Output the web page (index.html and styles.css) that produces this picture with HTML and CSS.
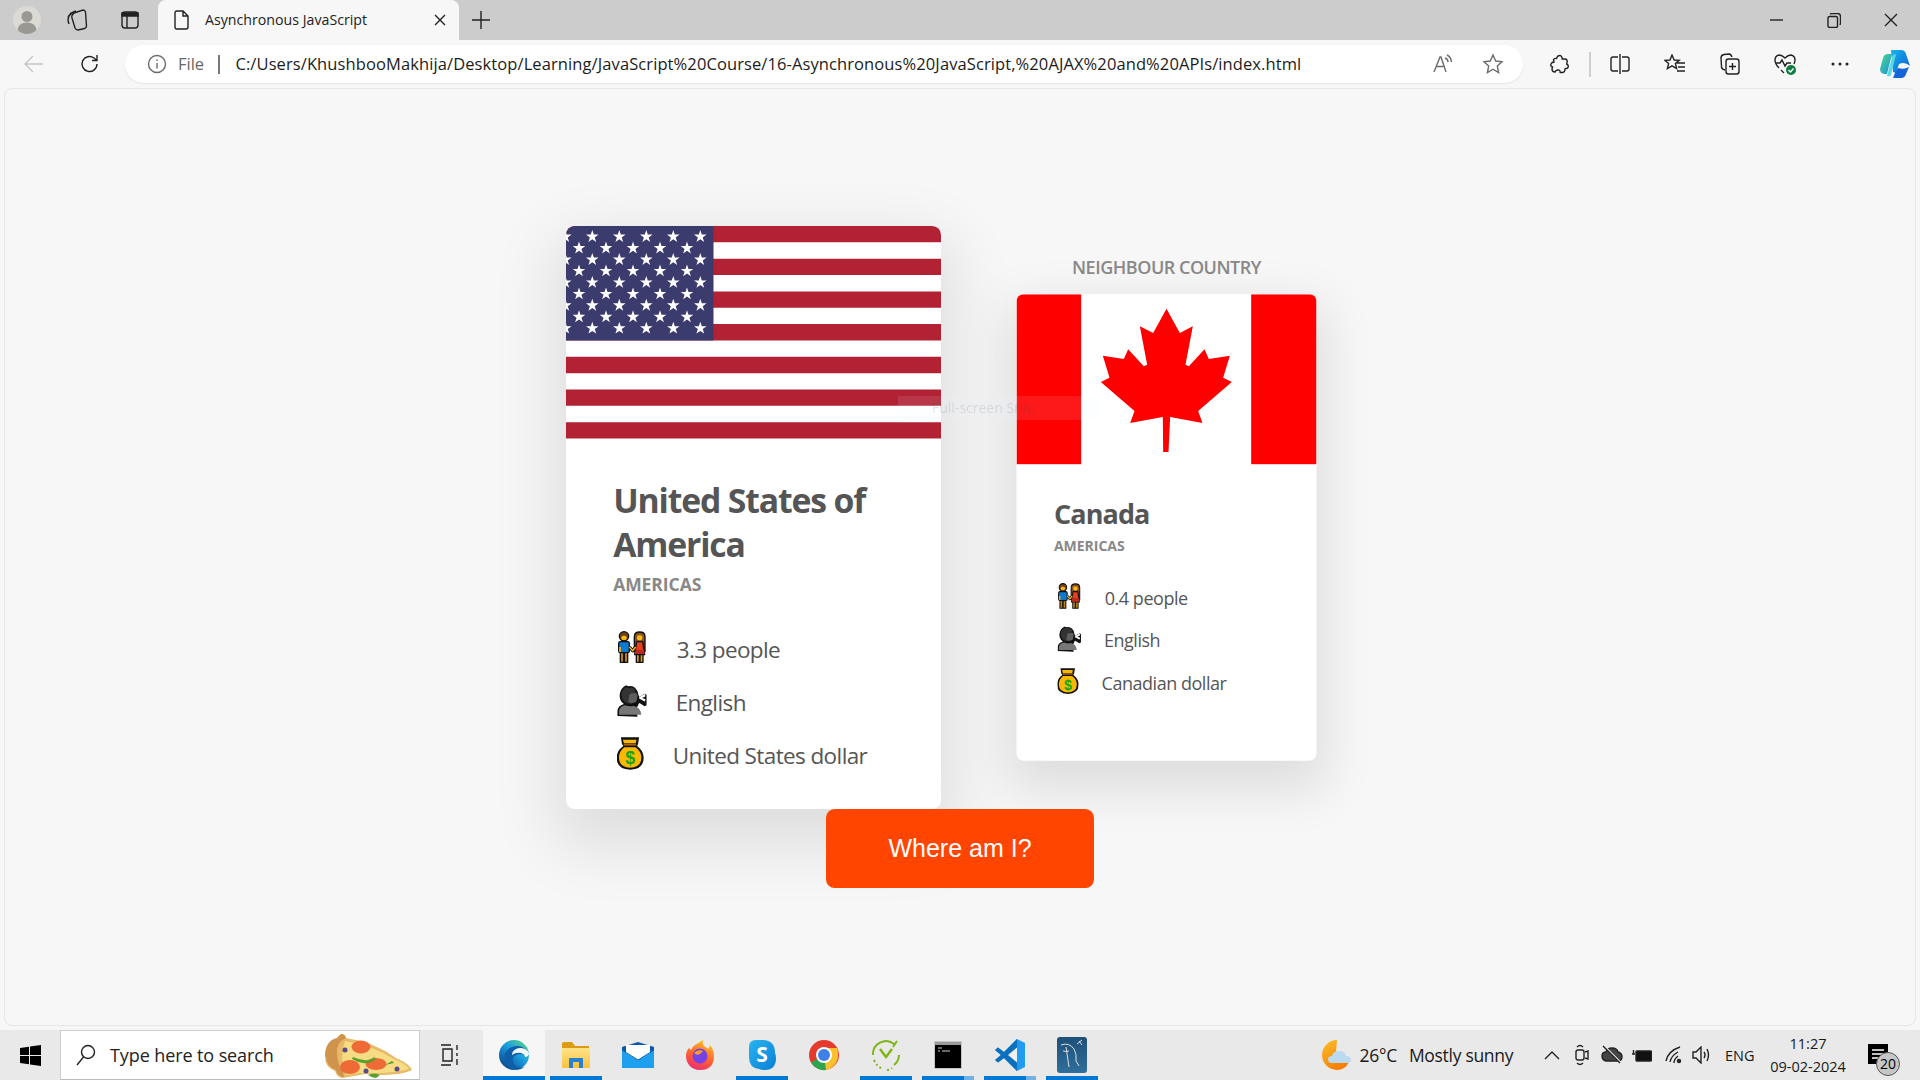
FILE: index.html
```html
<!DOCTYPE html>
<html lang="en">
<head>
<meta charset="utf-8">
<title>Asynchronous JavaScript</title>
<link rel="stylesheet" href="styles.css">
</head>
<body>
<svg class="defs" width="0" height="0" aria-hidden="true">
  <defs>
    <symbol id="e-people" viewBox="53 36 90 99">
      <path d="M90 84l10 11 9-11" fill="none" stroke="#111" stroke-width="10" stroke-linejoin="round"/>
      <g stroke="#111" stroke-width="4" stroke-linejoin="round">
        <path d="M63 100h10v30H63zM75 100h10v30H75z" fill="#bb8108"/>
        <rect x="58" y="68" width="32" height="33" rx="5" fill="#0c7ad2"/>
        <circle cx="74" cy="52" r="14" fill="#6e4218"/>
        <path d="M111 105h9v25h-9zM122 105h9v25h-9z" fill="#e3a00c"/>
        <path d="M105 98V53q0-14 16-14t16 14v45z" fill="#8a5020"/>
        <path d="M112 68h18l6 39h-30z" fill="#e8401a"/>
      </g>
      <rect x="66" y="50" width="16" height="13" rx="5.500" fill="#fbb810"/>
      <rect x="59.500" y="84" width="5" height="15" fill="#fbb810"/>
      <path d="M90 84l10 11 9-11" fill="none" stroke="#fbb810" stroke-width="4.500"/>
      <rect x="113" y="49" width="16" height="15" rx="5.500" fill="#fbb810"/>
      <path d="M109 92h25l2 13h-30z" fill="#b92a22"/>
    </symbol>
    <symbol id="e-speak" viewBox="52 190 92 102">
      <path d="M53 289v-14q0-17 20-23-15-10-13-30 3-20 20-28l6 3q14-3 22 5 8 7 10 22l3 6 16-10 6 3v33l-6 3-16-10-3 3q-1 10-12 12l-12 2q18 1 21 24v1z" fill="#111"/>
      <path d="M58 285v-10q0-15 19-19 12 5 25 2 22 2 25 27z" fill="#777"/>
      <path d="M65 222q2-16 16-23l6 3q13-3 19 4 3 4 4 10-10-1-14 8-2 6-5 7l-2 5q0 7 3 16-27-3-27-30z" fill="#333"/>
      <path d="M89 225q4-8 22-7l5 9-3 4 3 3-3 1v5q-1 7-10 8l-8 2q-6-1-8-6-1-7 2-11z" fill="#5e5e5e"/>
      <path d="M120 231l17-10 2 2v6l-10 4 10 3v6l-2 2-17-9z" fill="#fff"/>
    </symbol>
    <symbol id="e-money" viewBox="52 350 82 100">
      <path d="M64 351h55l-3 20-3 6q20 14 20 36 0 35-41 36-41-1-41-36 0-22 20-36l-4-6z" fill="#111"/>
      <path d="M70 358h41l-2 11H73z" fill="#fbb800"/>
      <rect x="72" y="370" width="38" height="6" fill="#a85f18"/>
      <path d="M74 381h34q18 12 18 32 0 29-34 30-34-1-34-30 0-20 16-32z" fill="#fbb800"/>
      <text x="92" y="433" class="dollar">$</text>
    </symbol>
    <g id="s-row6">
      <use href="#s-star" x="-0.7"/><use href="#s-star" x="26.3"/><use href="#s-star" x="53.3"/><use href="#s-star" x="80.3"/><use href="#s-star" x="107.3"/><use href="#s-star" x="134.3"/>
    </g>
    <g id="s-row5">
      <use href="#s-star" x="13"/><use href="#s-star" x="40"/><use href="#s-star" x="67"/><use href="#s-star" x="94"/><use href="#s-star" x="121"/>
    </g>
    <polygon id="s-star" fill="#fff" points="0,-6.6 1.5,-2.1 6.3,-2.1 2.4,0.8 3.9,5.3 0,2.6 -3.9,5.3 -2.4,0.8 -6.3,-2.1 -1.5,-2.1"/>
    <linearGradient id="g-edge" x1="0.9" y1="0.1" x2="0.2" y2="0.9"><stop offset="0" stop-color="#4fd08a"/><stop offset="0.45" stop-color="#1b9de2"/><stop offset="1" stop-color="#0c4f94"/></linearGradient>
    <linearGradient id="g-folder" x1="0" y1="0" x2="0" y2="1"><stop offset="0" stop-color="#ffe38a"/><stop offset="1" stop-color="#f9c33c"/></linearGradient>
    <linearGradient id="g-fox" x1="0.7" y1="0" x2="0.3" y2="1"><stop offset="0" stop-color="#ffc42a"/><stop offset="0.5" stop-color="#ff6a2a"/><stop offset="1" stop-color="#ee2a72"/></linearGradient>
    <linearGradient id="g-sky" x1="0" y1="0" x2="1" y2="1"><stop offset="0" stop-color="#28b4f0"/><stop offset="1" stop-color="#0a7fd6"/></linearGradient>
    <linearGradient id="g-my" x1="0" y1="0" x2="0" y2="1"><stop offset="0" stop-color="#1f4f78"/><stop offset="1" stop-color="#2f6f9b"/></linearGradient>
    <linearGradient id="g-sun" x1="0" y1="0" x2="0.6" y2="1"><stop offset="0" stop-color="#fbc02d"/><stop offset="1" stop-color="#f57c00"/></linearGradient>
    <linearGradient id="g-cop1" x1="0" y1="0" x2="1" y2="1"><stop offset="0" stop-color="#19b5e8"/><stop offset="1" stop-color="#0a5ad8"/></linearGradient>
    <linearGradient id="g-cop2" x1="0" y1="0" x2="1" y2="1"><stop offset="0" stop-color="#4cd98a"/><stop offset="1" stop-color="#1b8fe0"/></linearGradient>
  </defs>
</svg>

<header class="tabstrip">
  <div class="strip-btn strip-profile">
    <svg width="32" height="32" viewBox="0 0 32 32"><circle cx="16" cy="16" r="14" fill="#dcdad5"/><circle cx="16" cy="12.5" r="5.5" fill="#9a9892"/><path d="M6.5 26q1-7.500 9.500-7.500t9.500 7.500q-4 4-9.500 4t-9.500-4z" fill="#9a9892"/></svg>
  </div>
  <div class="strip-btn">
    <svg class="ico" width="22" height="24" viewBox="0 0 22 24"><path d="M2 9l3-4 3-1M3 16q-2-4 0-8l4-4 3-1M8 5l9-3q2 0 2.500 2l1 14q0 2-2 2.500L12 22q-2 0-3-2L6 10q-1-2 2-5z"/></svg>
  </div>
  <div class="strip-btn">
    <svg class="ico" width="20" height="20" viewBox="0 0 20 20"><rect x="2" y="2" width="16" height="16" rx="3"/><path d="M2 3h16v3H2z" fill="#222"/><path d="M7 6v12"/></svg>
  </div>
  <div class="tab">
    <svg class="ico tab-doc" width="16" height="20" viewBox="0 0 16 20"><path d="M2 3q0-2 2-2h6l5 5v11q0 2-2 2H4q-2 0-2-2zM10 1v5h5"/></svg>
    <span class="tab-title">Asynchronous JavaScript</span>
    <svg class="ico tab-close" width="12" height="12" viewBox="0 0 12 12"><path d="M1 1l10 10M11 1L1 11"/></svg>
  </div>
  <svg class="ico tab-plus" width="18" height="18" viewBox="0 0 18 18"><path d="M9 0v18M0 9h18"/></svg>
  <div class="win-ctrls">
    <div class="win-btn"><svg class="ico" width="13" height="2" viewBox="0 0 13 2"><path d="M0 1h13"/></svg></div>
    <div class="win-btn"><svg class="ico" width="14" height="15" viewBox="0 0 14 15"><rect x="1" y="3.500" width="9.500" height="11" rx="1.500"/><path d="M3.500 1.500q0-1 1-1h6q3 0 3 3v7q0 1-1 1"/></svg></div>
    <div class="win-btn"><svg class="ico" width="14" height="14" viewBox="0 0 14 14"><path d="M1 1l12 12M13 1L1 13"/></svg></div>
  </div>
</header>

<nav class="toolbar">
  <svg class="ico-light tb-back" width="20" height="18" viewBox="0 0 20 18"><path d="M19 9H1M9 1L1 9l8 8"/></svg>
  <svg class="ico tb-reload" width="20" height="20" viewBox="0 0 20 20"><path d="M17 10a7.500 7.500 0 1 1-3-6l2.500 2M17 1v5.500h-5"/></svg>
  <div class="address">
    <svg class="ico-grey addr-info" width="20" height="20" viewBox="0 0 20 20"><circle cx="10" cy="10" r="8.500"/><path d="M10 9v5.500M10 5.500v1.500"/></svg>
    <span class="addr-file">File</span>
    <span class="addr-sep"></span>
    <span class="addr-url">C:/Users/KhushbooMakhija/Desktop/Learning/JavaScript%20Course/16-Asynchronous%20JavaScript,%20AJAX%20and%20APIs/index.html</span>
    <svg class="ico-grey addr-read" width="20" height="20" viewBox="0 0 20 20"><path d="M1 18L7 3h1l5 15M3.500 12.500h7M12 4q3 1 3 4M14 1q4 2 4.500 7"/></svg>
    <svg class="ico-grey addr-star" width="22" height="22" viewBox="0 0 22 22"><path d="M11 2l2.700 6 6.300.7-4.700 4.300 1.300 6.500L11 16.200 5.400 19.500l1.300-6.500L2 8.700 8.300 8z"/></svg>
  </div>
  <div class="tools">
    <div class="tool"><svg class="ico" width="20" height="20" viewBox="0 0 20 20"><path d="M8 2q3-1.500 4 1.500l.2 1.500h3q2 .2 2 2.500l-.5 2.500q2 1 1.500 3-.5 2-3 1.500l-.5 2q-.2 2-2.500 2h-2q0-3-2.500-2.500T5 18q-3 0-3-3l.5-2Q0 12 1 10t3-2L3.500 6Q4 4 6.500 4.500 7 3 8 2z"/></svg></div>
    <span class="tool-sep"></span>
    <div class="tool"><svg class="ico" width="20" height="20" viewBox="0 0 20 20"><path d="M8 3H3q-2 0-2 2v10q0 2 2 2h5M12 3h5q2 0 2 2v10q0 2-2 2h-5M10 0v20"/></svg></div>
    <div class="tool"><svg class="ico" width="22" height="20" viewBox="0 0 22 20"><path d="M8 1l2.200 5 5 .4-3.800 3.200 1.200 5L8 11.800l-4.600 2.800 1.200-5L1 6.400 6 6zM13 9h8M14 13h7M13 17h8"/></svg></div>
    <div class="tool"><svg class="ico" width="20" height="22" viewBox="0 0 20 22"><path d="M5 17q-4-1-3.500-4L1 5q0-3 3-3.500l5-.5q2 0 3 3"/><rect x="6" y="6" width="13" height="15" rx="2.500"/><path d="M12.500 10v7M9 13.500h7"/></svg></div>
    <div class="tool"><svg class="ico" width="22" height="22" viewBox="0 0 22 22"><path d="M5 15Q1 11 1 7q0-4 4-5 3 0 6 3 3-3 6-3 4 1 4 5 0 2-1 4M1 10h5l2-3 3 6 2-3h4M7 17l3 3"/><circle cx="17" cy="17" r="5" fill="#107c41" stroke="none"/><path d="M14.500 17l2 2 3-3.500" stroke="#fff"/></svg></div>
    <div class="tool"><svg width="18" height="4" viewBox="0 0 18 4"><circle cx="2" cy="2" r="1.500" fill="#222"/><circle cx="9" cy="2" r="1.500" fill="#222"/><circle cx="16" cy="2" r="1.500" fill="#222"/></svg></div>
    <div class="tool"><svg width="32" height="32" viewBox="0 0 32 32"><path d="M12 2h10q4 0 5 4l4 12q-5-5-11-2l-3 9-3-1z" fill="url(#g-cop1)"/><path d="M4 10q1-4 5-4h4l-5 20H5q-4-1-4-5z" fill="url(#g-cop2)"/><path d="M14 30h8q4 0 5-4l3-7q-5 3-11 1l-3 5z" fill="#1466d8"/><path d="M8 28l5-19q1-3 4-3l-5 21q-1 2-4 1z" fill="#5ad9e0"/></svg></div>
  </div>
</nav>

<div class="frame-wrap">
  <main class="page">
    <section class="countries">
      <article class="country">
        <svg class="flag" viewBox="0 0 375 212.500" preserveAspectRatio="none">
          <rect width="375" height="212.500" fill="#fff"/>
          <path fill="#b22234" d="M0 0h375v16.350H0zM0 32.700h375v16.350H0zM0 65.400h375v16.350H0zM0 98.100h375v16.350H0zM0 130.800h375v16.350H0zM0 163.500h375v16.350H0zM0 196.200h375v16.300H0z"/>
          <rect width="147.500" height="114.450" fill="#3c3b6e"/>
          <use href="#s-row6" y="10.700"/><use href="#s-row5" y="22.200"/><use href="#s-row6" y="33.600"/><use href="#s-row5" y="45"/><use href="#s-row6" y="56.500"/><use href="#s-row5" y="68"/><use href="#s-row6" y="79.400"/><use href="#s-row5" y="90.900"/><use href="#s-row6" y="102.300"/>
        </svg>
        <div class="data">
          <h3 class="name">United States of America</h3>
          <h4 class="region">Americas</h4>
          <p class="row"><svg class="emoji em-people"><use href="#e-people"/></svg><span>3.3 people</span></p>
          <p class="row"><svg class="emoji em-speak"><use href="#e-speak"/></svg><span>English</span></p>
          <p class="row"><svg class="emoji em-money"><use href="#e-money"/></svg><span>United States dollar</span></p>
        </div>
      </article>
      <article class="country neighbour">
        <div class="neighbour-label">Neighbour country</div>
        <svg class="flag" viewBox="20 132 900 510" preserveAspectRatio="none">
          <rect x="20" y="132" width="900" height="510" fill="#fff"/>
          <path fill="#f00" d="M20 132h194v510H20zM724 132h196v510H724z"/>
          <polygon fill="#f00" points="470,175 510,248 549,228 527,343 537,348 584,297 597,326 660,316 640,382 666,395 565,482 578,518 481,500 476,605 460,605 459,500 361,518 374,482 273,395 299,382 279,316 342,326 355,297 402,348 412,343 390,228 430,248"/>
        </svg>
        <div class="data">
          <h3 class="name">Canada</h3>
          <h4 class="region">Americas</h4>
          <p class="row"><svg class="emoji em-people"><use href="#e-people"/></svg><span>0.4 people</span></p>
          <p class="row"><svg class="emoji em-speak"><use href="#e-speak"/></svg><span>English</span></p>
          <p class="row"><svg class="emoji em-money"><use href="#e-money"/></svg><span>Canadian dollar</span></p>
        </div>
      </article>
    </section>
    <button class="btn-country">Where am I?</button>
    <div class="snip-toast"><span class="snip-text">Full-screen Snip</span></div>
  </main>
</div>

<footer class="taskbar">
  <div class="start"><svg width="21" height="21" viewBox="0 0 21 21"><path d="M0 3l9-1.300V10H0zM10 1.500L21 0v10H10zM0 11h9v8.300L0 18zM10 11h11v10L10 19.500z" fill="#000"/></svg></div>
  <div class="search">
    <svg class="ico search-ico" width="20" height="22" viewBox="0 0 20 22"><circle cx="12" cy="8" r="6.500"/><path d="M7.500 13L1 21"/></svg>
    <span class="search-text">Type here to search</span>
    <svg class="pizza" width="90" height="46" viewBox="0 0 90 46">
      <path d="M2 24Q2 8 14 5l4-4q4 0 5 4 28 4 50 20 14 6 16 12-14 7-47 4l-22 4q-6 0-8-7-10-4-10-14z" fill="#e9b96a"/>
      <path d="M2 24Q2 8 14 5l4-4q4 0 5 4-10 4-9 16 1 12 6 18l1 5q-6 0-8-7-10-4-10-14z" fill="#cf934b"/>
      <path d="M22 8q26 4 49 18 12 5 15 10-16 5-48 4l-15 2Q16 24 22 8z" fill="#f6dc82"/>
      <ellipse cx="38" cy="14" rx="9.500" ry="6.500" fill="#ee6a36"/><ellipse cx="27" cy="34" rx="10" ry="7" fill="#ee6a36"/><ellipse cx="53" cy="31" rx="10.500" ry="6" fill="#ee6a36"/>
      <circle cx="22" cy="17" r="2.500" fill="#5a4a8a"/><circle cx="43" cy="38" r="2.500" fill="#5a4a8a"/><circle cx="74" cy="36" r="2.500" fill="#5a4a8a"/>
      <path d="M30 24q8 4 16 3 4-1 5-3l2 2q-6 5-13 4-6-1-11-4zM45 42q6-3 12 0l-4 3q-4 0-8-3zM62 32l7-4 2 2z" fill="#58a02c"/>
    </svg>
  </div>
  <div class="task-view"><svg class="ico" width="22" height="22" viewBox="0 0 22 22"><path d="M1 1h10M1 21h10M3 5h9v12H3zM17 1v5M17 9v3M17 15v6"/></svg></div>
  <div class="apps">
    <div class="app app-active on"><svg width="32" height="32" viewBox="0 0 32 32"><circle cx="16" cy="16" r="15" fill="url(#g-edge)"/><path d="M31 17q-2-9-11-10-9 0-13 7-2 8 4 14 6 4 12 2l4-2q-5 2-9-1-4-3-3-8 2-4 8-4 5 1 8 2z" fill="#0e5fa8"/><path d="M31 16q0-4-4-6-5-2-9 0-4 2-4 6 4-3 9-2 4 1 4 4 2 0 4-2z" fill="#fff" opacity="0.95"/></svg></div>
    <div class="app on"><svg width="30" height="28" viewBox="0 0 30 28"><path d="M1 3q0-2 2-2h8l3 4h14v5H1z" fill="#dd9a12"/><path d="M1 7h28v19q0 1-1 1H2q-1 0-1-1z" fill="url(#g-folder)"/><path d="M8 27V17h14v10h-4v-6h-6v6z" fill="#2a7fd0"/></svg></div>
    <div class="app"><svg width="32" height="26" viewBox="0 0 32 26"><path d="M0 5L16 0l16 5v21H0z" fill="#0a5aa8"/><path d="M0 8l16 10L32 8v18H0z" fill="#1ea0ee"/><path d="M4 3h24v8L16 18 4 11z" fill="#fff"/><path d="M0 8l16 10L32 8" fill="none" stroke="#0a68b8"/></svg></div>
    <div class="app"><svg width="30" height="32" viewBox="0 0 30 32"><path d="M15 31C6 31 1 24 1 17q0-5 3-8l2 2q1-3 4-5 5-3 8-5-1 3 1 6 2 1 4 3 2-2 2-4 4 5 4 11 0 14-14 14z" fill="url(#g-fox)"/><circle cx="15" cy="17" r="7.500" fill="#7542e5"/><path d="M9 14q4-4 9-2l-3 3q-3 2-6-1z" fill="#ff9a2e"/></svg></div>
    <div class="app on"><svg width="28" height="32" viewBox="0 0 28 32"><path d="M8 1h8q11 1 11 13 1 2 1 5 0 12-11 12-4 0-6-1-10-1-10-12V8q0-7 7-7z" fill="url(#g-sky)"/><text x="14" y="23" class="skype">S</text></svg></div>
    <div class="app"><svg width="32" height="32" viewBox="0 0 32 32"><circle cx="16" cy="16" r="15" fill="#e33b2e"/><path d="M16 16L3 23.500A15 15 0 0 0 18 31z" fill="#2fa44f"/><path d="M16 16l14-1A15 15 0 0 1 18 31z" fill="#fbc02d"/><path d="M16 9h13a15 15 0 0 1 1 7H21z" fill="#fbc02d"/><circle cx="16" cy="16" r="8" fill="#fff"/><circle cx="16" cy="16" r="6" fill="#3f7fe8"/></svg></div>
    <div class="app on"><svg width="32" height="34" viewBox="0 0 32 34" fill="none" stroke="#7fb519" stroke-width="2"><path d="M3 17A13 13 0 0 1 24 6M27 3l-4 6"/><path d="M10 11l6 8 6-8" stroke-width="2.500"/><path d="M29 17A13 13 0 0 1 24 27" /><path d="M4 22q3 7 9 9M17 32q3 0 5-2" stroke-dasharray="2 2.500"/></svg></div>
    <div class="app on split"><svg width="28" height="28" viewBox="0 0 28 28"><rect width="28" height="28" rx="1" fill="#c6c6c6"/><rect x="1" y="3" width="26" height="24" fill="#000"/><rect x="1" y="1" width="26" height="3" fill="#9a9a9a"/><path d="M4 7h4M4 10h2M8 10h8" stroke="#ccc"/></svg></div>
    <div class="app on split"><svg width="30" height="32" viewBox="0 0 30 32"><path d="M22 0l8 4v24l-8 4-13-13-6 4.500L0 21l6-5-6-5 3-2.500L9 13z" fill="#1f9cf0"/><path d="M22 0v32L9 19l-6 4.500L0 21l6-5-6-5 3-2.500L9 13z" fill="#0a6fbd"/><path d="M22 8.500L13 16l9 7.500z" fill="#f0f0f0"/></svg></div>
    <div class="app on"><svg width="30" height="36" viewBox="0 0 30 36"><rect width="30" height="36" rx="3" fill="url(#g-my)"/><path d="M4 8q8-3 13 4 3 5 2 12l3 5M9 10l3 20M6 14q3 1 6 0M22 4l3 4M20 7l5-4" fill="none" stroke="#d5e1ea"/></svg></div>
  </div>
  <div class="tray">
    <svg class="tray-sun" width="30" height="32" viewBox="0 0 30 32"><path d="M15 1a15 15 0 1 0 0 30q8 0 12-8L14 13z" fill="url(#g-sun)"/><path d="M10 24q-4 0-4-3.500 0-3.500 4-3.500 1-5 7-5t7 5q5 0 5 3.500t-4 3.500z" fill="#bcd9f2"/></svg>
    <span class="tray-temp">26°C</span>
    <span class="tray-cond">Mostly sunny</span>
    <svg class="ico tray-chev" width="16" height="9" viewBox="0 0 16 9"><path d="M1 8l7-7 7 7"/></svg>
    <svg class="ico t-meet" width="14" height="24" viewBox="0 0 14 24"><path d="M2 4q3-3 6 0M2 20q3 3 6 0"/><rect x="1" y="7" width="8" height="10" rx="2"/><path d="M10 9l3-1v8l-3-1"/></svg>
    <svg class="ico t-cloud" width="22" height="20" viewBox="0 0 22 20"><path d="M5 16Q1 15 1 11q0-4 4-4 1-4 6-4t6 4q4 1 4 5 0 3-3 4z" fill="#444"/><path d="M3 1l17 17" stroke="#eee" stroke-width="2"/><path d="M2 1l17 17"/></svg>
    <svg class="ico t-batt" width="20" height="13" viewBox="0 0 20 13"><path d="M0 5h3M1.500 1v4"/><rect x="4" y="2" width="15.500" height="10" rx="1" fill="#111"/></svg>
    <svg class="ico t-wifi" width="18" height="18" viewBox="0 0 18 18"><path d="M1 15Q3 5 15 1M5 16q1-6 8-10M9 17q0-4 4-7"/><circle cx="14" cy="15" r="1.500" fill="#333"/></svg>
    <svg class="ico t-vol" width="20" height="18" viewBox="0 0 20 18"><path d="M1 6v6h3l5 5V1L4 6zM12 6q2 3 0 6M15 3q3 6 0 12"/></svg>
    <span class="tray-lang">ENG</span>
    <div class="tray-clock"><span>11:27</span><span>09-02-2024</span></div>
    <div class="tray-notif">
      <svg width="22" height="22" viewBox="0 0 22 22"><path d="M0 0h20v20H0z" fill="#000"/><path d="M4 6h12M4 10h12M4 14h8" stroke="#fff" stroke-width="1.500"/></svg>
      <span class="notif-badge">20</span>
    </div>
  </div>
</footer>
</body>
</html>
```

FILE: styles.css
```css
* { box-sizing: border-box; }
html, body { margin: 0; height: 100%; }
body {
  display: flex;
  flex-direction: column;
  width: 1920px;
  height: 1080px;
  overflow: hidden;
  font-family: "Open Sans", "Noto Sans", "DejaVu Sans", sans-serif;
  color: #555;
  background: #f7f7f7;
}
.defs { position: absolute; }
.ico, .ico-light, .ico-grey { fill: none; stroke-width: 1.4; flex: none; }
.ico { stroke: #222; }
.ico-light { stroke: #c4c4c4; }
.ico-grey { stroke: #6b6b6b; }

/* tab strip */
.tabstrip {
  height: 40px;
  flex: none;
  display: flex;
  align-items: center;
  background: #cccccc;
  padding-left: 4px;
}
.strip-btn { width: 50px; display: flex; justify-content: center; align-items: center; }
.strip-profile { width: 46px; }
.strip-btn:nth-child(2) { width: 53px; margin-right: 0; }
.strip-btn:nth-child(3) { width: 53px; margin-left: 0; }
.tab {
  width: 301px;
  height: 40px;
  background: #f7f7f7;
  border-radius: 8px 8px 0 0;
  display: flex;
  align-items: center;
  margin-left: 2px;
  padding-left: 15px;
  color: #222;
  align-self: flex-end;
}
.tab-title { font-size: 14.2px; margin: 0 0 2px 16px; width: 229px; white-space: nowrap; }
.tab-plus { margin-left: 13px; }
.win-ctrls { margin-left: auto; display: flex; }
.win-btn { width: 57.500px; display: flex; justify-content: center; align-items: center; height: 40px; }

/* toolbar */
.toolbar {
  height: 48px;
  flex: none;
  display: flex;
  align-items: center;
  background: #f7f7f7;
  padding-left: 24px;
}
.tb-back { margin-right: 36px; }
.tb-reload { margin-right: 25px; }
.address {
  width: 1398px;
  height: 38px;
  flex: none;
  background: #fff;
  border-radius: 19px;
  display: flex;
  align-items: center;
  padding-left: 22px;
  box-shadow: 0 1px 2px rgba(0, 0, 0, .08);
}
.addr-file { font-size: 16.5px; color: #666; margin: 0 0 2px 11px; }
.addr-sep { width: 1.500px; height: 19px; background: #777; margin: 0 15.800px 0 14px; }
.addr-url { font-size: 16.500px; color: #1c1c1c; white-space: nowrap; width: 1198px; letter-spacing: 0.1px; margin-bottom: 2px; }
.addr-star { margin-left: 29px; }
.tools { display: flex; align-items: center; margin-left: 9px; }
.tool { width: 55px; display: flex; justify-content: center; align-items: center; height: 40px; flex: none; }
.tool-sep { width: 2px; height: 25px; background: #cfcfcf; margin: 0 1px 0 2px; }

/* page */
.frame-wrap { flex: 1; display: flex; padding: 0 4px 4px; min-height: 0; background: #f7f7f7; }
.page {
  flex: 1;
  position: relative;
  display: flex;
  flex-direction: column;
  align-items: center;
  justify-content: center;
  border: 1px solid #e6e6e6;
  border-radius: 8px;
  background: #f7f7f7;
}
.countries { display: flex; justify-content: center; }
.country {
  position: relative;
  width: 375px;
  margin: 0 37.500px;
  background: #fff;
  border-radius: 8.750px;
  box-shadow: 0 25px 62.500px 12.500px rgba(0, 0, 0, .1);
}
.neighbour { margin-left: 0; transform: scale(.8) translateY(12.500px); }
.neighbour-label {
  position: absolute;
  top: -49px;
  width: 100%;
  text-align: center;
  font-size: 22.500px;
  font-weight: 600;
  text-transform: uppercase;
  color: #888;
  letter-spacing: -0.6px;
}
.flag { display: block; width: 375px; height: 212.500px; border-radius: 8.750px 8.750px 0 0; }
.data { padding: 39px 46.875px 33px; }
.name { margin: 0 0 7px; font-size: 33.750px; line-height: 44px; font-weight: 700; color: #555; letter-spacing: -1.150px; }
.region { margin: 0 0 33.500px; font-size: 17.500px; line-height: 23px; font-weight: 700; color: #888; text-transform: uppercase; letter-spacing: -0.050px; }
.row { display: flex; align-items: center; height: 41px; margin: 0 0 12px; font-size: 22.500px; color: #555; white-space: nowrap; letter-spacing: -0.600px; }
.row:last-child { margin-bottom: 0; }
.emoji { margin-left: 4px; height: 33px; flex: none; margin-bottom: 5px; }
.em-people { width: 30px; margin-right: 29.500px; }
.em-speak { width: 30px; margin-right: 28.500px; }
.em-money { width: 27px; margin-right: 28.500px; }
.dollar { font-family: "Liberation Sans", sans-serif; font-weight: 700; font-size: 54px; fill: #16a51a; text-anchor: middle; }
.btn-country {
  position: relative;
  border: 0;
  width: 268px;
  height: 79px;
  flex: none;
  border-radius: 8.750px;
  background: #ff4500;
  color: #fff;
  font-family: "Liberation Sans", Arial, sans-serif;
  font-size: 25px;
  padding: 0;
}
.snip-toast {
  position: absolute;
  left: 893px;
  top: 307px;
  width: 202px;
  height: 24px;
  background: rgba(232, 245, 255, .1);
  font-size: 14px;
  line-height: 24px;
  color: rgba(60, 60, 60, .14);
  padding-left: 34px;
  white-space: nowrap;
}

/* taskbar */
.taskbar {
  height: 50px;
  flex: none;
  display: flex;
  align-items: center;
  background: #e9e9e9;
  color: #1a1a1a;
}
.start { width: 60px; display: flex; justify-content: center; flex: none; }
.search {
  width: 360px;
  height: 50px;
  flex: none;
  background: #fff;
  border: 1px solid #cfcfcf;
  border-bottom-color: #bbb;
  display: flex;
  align-items: center;
  padding-left: 15px;
  position: relative;
}
.search-text { font-size: 18px; margin-left: 14px; color: #222; letter-spacing: -0.1px; }
.pizza { position: absolute; left: 262px; top: 2px; }
.task-view { width: 60px; display: flex; justify-content: center; flex: none; padding-left: 2px; }
.apps { display: flex; margin-left: 3px; height: 50px; }
.app {
  width: 62px;
  height: 50px;
  display: flex;
  align-items: center;
  justify-content: center;
  position: relative;
  flex: none;
}
.app-active { background: #f6f6f6; }
.app.on::after {
  content: "";
  position: absolute;
  left: 0;
  right: 0;
  bottom: 0;
  height: 4px;
  margin: 0 5px;
  background: #0078d4;
}
.app-active.on::after { margin: 0; }
.app.split::after { background: linear-gradient(to right, #0078d4 80%, #6fb2e6 80%); }
.skype { font-family: "Open Sans", sans-serif; font-weight: 700; font-size: 21px; fill: #fff; text-anchor: middle; }
.tray { margin-left: auto; display: flex; align-items: center; height: 50px; font-size: 17.500px; flex: none; }
.tray-sun { margin-right: 7.500px; }
.tray-temp { letter-spacing: -0.3px; margin-right: 12px; }
.tray-cond { letter-spacing: -0.3px; margin-right: 31px; }
.tray-chev { margin-right: 15px; }
.t-meet { margin-right: 11.500px; }
.t-cloud { margin-right: 9.400px; }
.t-batt { margin-right: 12.600px; }
.t-wifi { margin-right: 9.300px; }
.t-vol { margin-right: 13px; }
.tray-lang { font-size: 14.500px; margin: 0 11.500px 0 0; }
.tray-clock { display: flex; flex-direction: column; align-items: center; font-size: 14.500px; line-height: 23px; width: 84px; }
.tray-notif { width: 40px; margin-left: 18px; margin-right: 12px; position: relative; height: 36px; display: flex; align-items: center; }
.notif-badge {
  position: absolute;
  left: 8px;
  top: 15px;
  width: 24px;
  height: 24px;
  border-radius: 50%;
  background: #c6c6c6;
  border: 1px solid #555;
  font-size: 14px;
  line-height: 22px;
  text-align: center;
  color: #000;
}
```
